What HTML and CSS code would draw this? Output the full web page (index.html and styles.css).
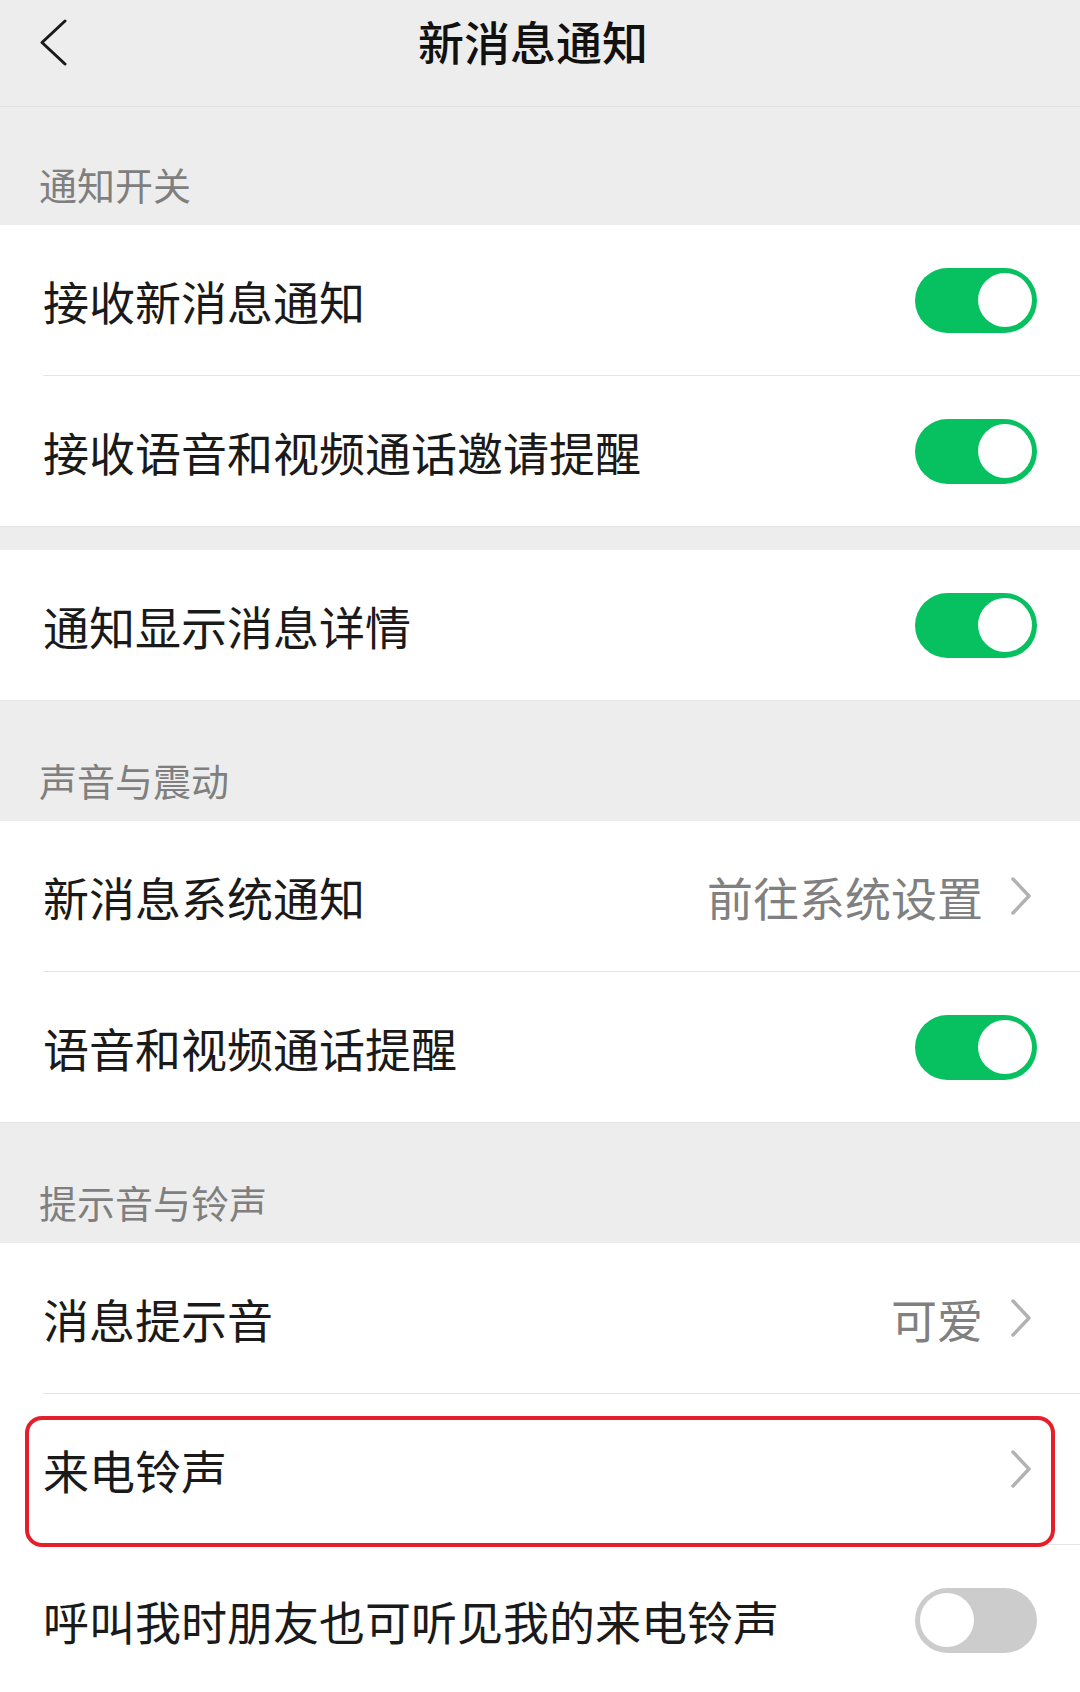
FILE: index.html
```html
<!DOCTYPE html>
<html lang="zh-CN">
<head>
    <meta charset="UTF-8">
    <meta name="viewport" content="width=device-width, initial-scale=1.0">
    <title>新消息通知</title>
    <link rel="stylesheet" href="styles.css">
</head>
<body>
    <header class="nav-bar">
        <svg class="nav-back" viewBox="0 0 28 48" width="28" height="48">
            <path d="M26 2 L3 23.5 L26 45" fill="none" stroke="#1a1a1a" stroke-width="3" stroke-linecap="round" stroke-linejoin="round"/>
        </svg>
        <h1 class="nav-title">新消息通知</h1>
        <span></span>
    </header>

    <div class="group-title first">通知开关</div>
    <div class="cell-group">
        <div class="cell">
            <div class="cell-body">
                <span class="cell-label">接收新消息通知</span>
                <span class="switch on"></span>
            </div>
        </div>
        <div class="cell">
            <div class="cell-body">
                <span class="cell-label">接收语音和视频通话邀请提醒</span>
                <span class="switch on"></span>
            </div>
        </div>
    </div>

    <div class="cell-group spaced">
        <div class="cell">
            <div class="cell-body">
                <span class="cell-label">通知显示消息详情</span>
                <span class="switch on"></span>
            </div>
        </div>
    </div>

    <div class="group-title">声音与震动</div>
    <div class="cell-group">
        <div class="cell">
            <div class="cell-body">
                <span class="cell-label">新消息系统通知</span>
                <span class="cell-value">前往系统设置</span>
                <svg class="arrow" viewBox="0 0 22 40" width="22" height="40">
                    <path d="M3 3 L19 20 L3 37" fill="none" stroke="#b2b2b2" stroke-width="3.5" stroke-linecap="round" stroke-linejoin="round"/>
                </svg>
            </div>
        </div>
        <div class="cell">
            <div class="cell-body">
                <span class="cell-label">语音和视频通话提醒</span>
                <span class="switch on"></span>
            </div>
        </div>
    </div>

    <div class="group-title">提示音与铃声</div>
    <div class="cell-group">
        <div class="cell">
            <div class="cell-body">
                <span class="cell-label">消息提示音</span>
                <span class="cell-value">可爱</span>
                <svg class="arrow" viewBox="0 0 22 40" width="22" height="40">
                    <path d="M3 3 L19 20 L3 37" fill="none" stroke="#b2b2b2" stroke-width="3.5" stroke-linecap="round" stroke-linejoin="round"/>
                </svg>
            </div>
        </div>
        <div class="cell">
            <div class="cell-body">
                <span class="cell-label">来电铃声</span>
                <svg class="arrow" viewBox="0 0 22 40" width="22" height="40">
                    <path d="M3 3 L19 20 L3 37" fill="none" stroke="#b2b2b2" stroke-width="3.5" stroke-linecap="round" stroke-linejoin="round"/>
                </svg>
            </div>
            <div class="highlight"></div>
        </div>
        <div class="cell">
            <div class="cell-body">
                <span class="cell-label">呼叫我时朋友也可听见我的来电铃声</span>
                <span class="switch"></span>
            </div>
        </div>
    </div>
</body>
</html>
```

FILE: styles.css
```css
body {
    margin: 0;
    background-color: #ededed;
    font-family: "Noto Sans CJK SC", "Noto Sans", sans-serif;
    color: #1a1a1a;
}
.nav-bar {
    display: grid;
    grid-template-columns: 1fr auto 1fr;
    align-items: center;
    height: 85px;
    padding: 0 39px 21px;
    border-bottom: 1px solid #e0e0e0;
    background-color: #ededed;
}
.nav-back {
    display: block;
}
.nav-title {
    margin: 0 14px 6px 0;
    font-size: 46px;
    font-weight: 500;
    line-height: 60px;
    color: #111;
}
.group-title {
    height: 120px;
    box-sizing: border-box;
    padding: 52px 39px 0;
    font-size: 38px;
    line-height: 53px;
    color: #7f7f7f;
}
.group-title.first {
    height: 118px;
    padding-top: 50px;
}
.cell-group {
    background-color: white;
    border-bottom: 1px solid #e5e5e5;
}
.cell-group.spaced {
    margin-top: 23px;
}
.cell {
    position: relative;
    padding-left: 43px;
}
.cell-body {
    display: flex;
    align-items: center;
    height: 150px;
    padding-right: 43px;
    border-bottom: 1px solid #e5e5e5;
}
.cell:last-child .cell-body {
    border-bottom: none;
}
.cell-label {
    flex: 1;
    font-size: 46px;
    line-height: 60px;
    white-space: nowrap;
}
.cell-value {
    font-size: 46px;
    line-height: 60px;
    color: #808080;
    margin-right: 27px;
}
.arrow {
    display: block;
    margin-right: 5px;
}
.switch {
    position: relative;
    width: 122px;
    height: 65px;
    border-radius: 33px;
    background-color: #cccccc;
    flex-shrink: 0;
}
.switch::after {
    content: "";
    position: absolute;
    top: 5.5px;
    left: 5px;
    width: 54px;
    height: 54px;
    border-radius: 50%;
    background-color: white;
}
.switch.on {
    background-color: #07c160;
}
.switch.on::after {
    left: auto;
    right: 5px;
}
.highlight {
    position: absolute;
    top: 22px;
    bottom: -2px;
    left: 25px;
    right: 25px;
    border: 4px solid #e61e2a;
    border-radius: 17px;
}
```
